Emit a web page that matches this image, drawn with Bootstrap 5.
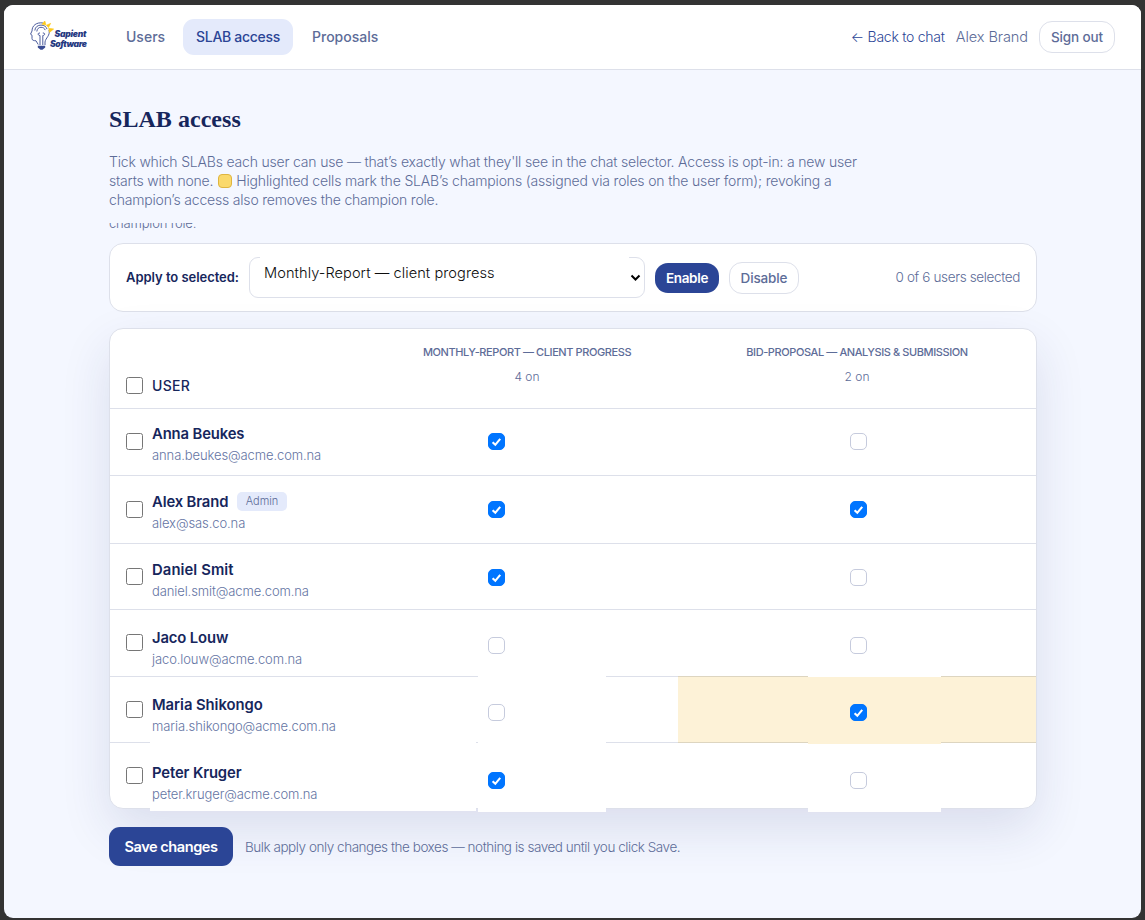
<!DOCTYPE html>
<html lang="en">
<head>
<meta charset="utf-8">
<meta name="viewport" content="width=device-width, initial-scale=1">
<title>SLAB access</title>
<link href="https://cdn.jsdelivr.net/npm/bootstrap@5.3.0/dist/css/bootstrap.min.css" rel="stylesheet">
<style>
:root{--ink:#16265c;--brand:#2b4596;--muted2:#5d6c98;--line:#dde0ea}
body{background:#333;font-family:Inter,"Open Sans",sans-serif;font-weight:350;color:var(--muted2);font-size:14px;line-height:20px;padding:5px 4px 2px;height:920px;overflow:hidden}
.frame{background:#f4f7ff;border-radius:9px;height:913px;overflow:hidden}
.topbar{height:65px;background:#fff;border-bottom:1px solid var(--line);padding:0 26px}
.links{margin-left:25px;gap:6px}
.topbar .nav-link{font-size:14px;font-weight:500;color:var(--muted2);padding:8px 0 8px 13px;border-radius:11px;line-height:20px;height:36px;width:110px;white-space:nowrap}
.topbar .nav-link:first-child{width:64px}
.topbar .nav-link.active{background:#e4eafb;color:var(--brand);letter-spacing:-.29px}
.logo{width:58px;height:30px;margin-top:-2px}
.back{color:var(--brand);margin-right:11px;letter-spacing:-.26px}
.who{font-size:14.6px;margin-right:11px;letter-spacing:-.1px}
.pill{border:1px solid var(--line);background:#fff;border-radius:13px;height:32px;font-size:13.5px;font-weight:500;color:var(--muted2);padding:0;line-height:30px;letter-spacing:-.13px;width:76px;white-space:nowrap}
.page{width:928px;margin-left:105px;padding-top:34px}
h1{font:700 24px/30px "Liberation Serif",serif;color:var(--ink);margin:0 0 18px;letter-spacing:.04px}
.intro{line-height:19px;font-size:14px;margin:0;white-space:nowrap;letter-spacing:-.19px}
.intro .legend{letter-spacing:-.165px}
.swatch{display:inline-block;width:14px;height:14px;border-radius:4px;background:#fad96c;border:1px solid #dfb540;vertical-align:-2px;margin:0 4px 0 5px}
.ghost{height:8px;margin:14px 0 12px;overflow:hidden;font-size:13px;line-height:16px;display:flex;align-items:flex-end;letter-spacing:-.18px}
.panel{background:#fff;border:1px solid var(--line);border-radius:14px}
.tools{height:69px;padding:0 16px;margin-bottom:16px}
.tools .lead-in{font-weight:600;font-size:13px;color:var(--ink);letter-spacing:-.04px;width:113px;white-space:nowrap;margin-top:-1px}
.tools .total{font-size:13.5px;letter-spacing:-.36px;margin-top:-1px}
.picker{width:396px;height:41px;border:1px solid var(--line);border-radius:9px;margin-left:10px;position:relative;color:#0d0d0d;font-size:14.6px;padding:5px 14px;letter-spacing:.06px}
.picker::before{content:"";position:absolute;left:10px;right:15px;top:-1px;height:1px;background:#fff}
.picker svg{position:absolute;right:3px;top:16px}
.solid{background:var(--brand);color:#fff;font-weight:600;border:0;letter-spacing:-.35px}
.apply{width:64px;height:30px;margin-left:10px}
.revoke{width:70px;margin-left:10px}
.matrix{height:481px;box-shadow:0 20px 50px rgba(30,45,105,.12)}
.line3{display:grid;grid-template-columns:266px 302px 358px;border-bottom:1px solid var(--line);height:67px}
.line3>div{position:relative}
.line3.head{height:80px}
.line3.r2{height:68px}.line3.r3,.line3.r5{height:66px}.line3.r6{height:65px;border:0}
.userhead{padding:47px 0 0 42px;font-weight:500;color:var(--ink);letter-spacing:.3px}
.person{padding:15px 0 0 42px}
.r2 .person,.r3 .person{padding-top:16px}.r4 .person,.r5 .person{padding-top:18px}.r6 .person{padding-top:20px}
.person b{display:block;font-weight:600;font-size:14.8px;color:var(--ink);line-height:20px;letter-spacing:-.12px}
.r3 .person b{letter-spacing:.1px}.r5 .person b{letter-spacing:-.04px}
.person small{display:block;font-size:13px;line-height:20px;margin-top:1px;color:#6474a3;font-weight:300;letter-spacing:-.1px}
.tick{position:absolute;width:17px;height:17px;margin:0!important;top:24px;border:1px solid #c6cbdd;border-radius:5px!important;background-size:17px 17px!important;z-index:2}
.tick.sel{left:16px;border-color:#767676;border-radius:2.5px!important}
.r2 .tick.sel{top:25px}.head .tick.sel{top:48px}
.r2 .tick,.r3 .tick{top:25px}.r3 .tick.sel{top:24px}
.r4 .tick:not(.sel),.r5 .tick:not(.sel){top:27px}.r6 .tick:not(.sel){top:29px}
.c1 .tick{left:112px}.c2 .tick{left:172px}
.tick:checked{background-color:#0075ff;border-color:#0075ff;background-image:url("data:image/svg+xml,%3Csvg xmlns='http://www.w3.org/2000/svg' viewBox='0 0 17 17'%3E%3Cpath d='M4.6 9.2l2.7 2.6 4.900-6' fill='none' stroke='%23fff' stroke-width='2.1'/%3E%3C/svg%3E")}
.colname{font-size:11px;font-weight:500;line-height:14px;padding-top:16px;text-align:center;letter-spacing:-.41px}
.count{font-size:12px;line-height:16px;margin-top:10px;text-align:center;font-weight:300}
.role{position:absolute;left:127px;top:16px;width:50px;height:19px;background:#e4eafb;border-radius:5px;font-size:11px;line-height:19px;text-align:center}
.champ{background:#fdf2d7;box-shadow:0 1px #ddd5c0,0 -1px #ddd5c0}
.cover::after{content:"";position:absolute;background:#fff;top:-1px;height:68px}
.c1.cover::after{left:102px;width:128px}
.c2.cover::after{left:130px;width:133px}
.c2.champ.cover::after{background:linear-gradient(#fff 1px,#fdf2d7 1px);z-index:1}
.r6 .cover::after{height:70px}.r6 .c2.cover::after{top:1px;height:68px}
.r6 .c0.cover::after{left:40px;width:326px;height:69px}
.r6 .person{position:relative;z-index:1}
.save{width:124px;height:39px;border-radius:11px;font-size:14.6px;margin-top:18px;letter-spacing:-.48px}
.hint{font-size:13.5px;margin:28px 0 0 12px;letter-spacing:-.46px;white-space:nowrap}
</style>
</head>
<body>
<div class="frame">
<nav class="topbar d-flex align-items-center">
 <svg class="logo" viewBox="30 20 58 30"><g fill="none" stroke="#3a4c93" stroke-width=".9"><path d="M43 22c-6.500-1-11 2.500-11 8l-1.500 3.200 1.500 1v3.400c0 1.800 1.800 2 4 2.200l2.200 3.700M49 29c1.500 5.500-3.500 8-4 12v3"/><path d="M34.800 29.500c.4-3.600 3-5.400 6.200-5.400s5.400 1.600 6 4M36.800 30.500c.3-2.800 2-4.200 4.200-4.200s3.600 1 4.200 2.800"/><path d="M40 44V34.500c-2.500 0-2.500-3 0-2.500M42.800 44V34.500c2.500 0 2.500-3 0-2.500"/></g><path d="M37.800 44.800h7.400v1.600l-2.700 2.400h-2l-2.700-2.400z" fill="#3a4c93"/><path d="M42 23.300l2.800-3.500 1.200 4.200zM46.400 24.300l4.300-2-2.200 4.300zM48.700 27.200l5 .8-4.200 3.400z" fill="#fdc91c" stroke="#fdc91c" stroke-width=".6"/><g font-family="Inter,sans-serif" font-weight="900" font-style="italic" font-size="8.600" fill="#25387f"><text x="54.500" y="36" textLength="32">Sapient</text><text x="50" y="46" textLength="37">Software</text></g></svg>
 <div class="nav d-flex links"><a class="nav-link">Users</a><a class="nav-link active">SLAB access</a><a class="nav-link">Proposals</a></div>
 <div class="ms-auto d-flex align-items-center"><span class="back">← Back to chat</span><span class="who">Alex Brand</span><button class="pill">Sign out</button></div>
</nav>
<main class="page">
 <h1>SLAB access</h1>
 <p class="intro">Tick which SLABs each user can use — that’s exactly what they'll see in the chat selector. Access is opt-in: a new user<br>starts with none.<i class="swatch"></i><span class="legend">Highlighted cells mark the SLAB’s champions (assigned via roles on the user form); revoking a</span><br>champion’s access also removes the champion role.</p>
 <div class="ghost">champion role.</div>
 <section class="panel tools d-flex align-items-center">
  <span class="lead-in">Apply to selected:</span>
  <div class="picker">Monthly-Report — client progress<svg width="11" height="8"><path d="M1.500 1.500l4 4 4-4" fill="none" stroke="#000" stroke-width="2"/></svg></div>
  <button class="pill solid apply">Enable</button><button class="pill revoke">Disable</button>
  <span class="total ms-auto">0 of 6 users selected</span>
 </section>
 <section class="panel matrix">
  <div class="line3 head"><div class="c0"><input type="checkbox" class="form-check-input tick sel"><div class="userhead">USER</div></div><div><div class="colname">MONTHLY-REPORT — CLIENT PROGRESS</div><div class="count">4 on</div></div><div><div class="colname">BID-PROPOSAL — ANALYSIS &amp; SUBMISSION</div><div class="count">2 on</div></div></div>
  <div class="line3 r1"><div class="c0"><input type="checkbox" class="form-check-input tick sel"><div class="person"><b>Anna Beukes</b><small>anna.beukes@acme.com.na</small></div></div><div class="c1"><input type="checkbox" checked class="form-check-input tick"></div><div class="c2"><input type="checkbox" class="form-check-input tick"></div></div>
  <div class="line3 r2"><div class="c0"><input type="checkbox" class="form-check-input tick sel"><div class="person"><b>Alex Brand</b><small>alex@sas.co.na</small></div><span class="role">Admin</span></div><div class="c1"><input type="checkbox" checked class="form-check-input tick"></div><div class="c2"><input type="checkbox" checked class="form-check-input tick"></div></div>
  <div class="line3 r3"><div class="c0"><input type="checkbox" class="form-check-input tick sel"><div class="person"><b>Daniel Smit</b><small>daniel.smit@acme.com.na</small></div></div><div class="c1"><input type="checkbox" checked class="form-check-input tick"></div><div class="c2"><input type="checkbox" class="form-check-input tick"></div></div>
  <div class="line3 r4"><div class="c0"><input type="checkbox" class="form-check-input tick sel"><div class="person"><b>Jaco Louw</b><small>jaco.louw@acme.com.na</small></div></div><div class="c1"><input type="checkbox" class="form-check-input tick"></div><div class="c2"><input type="checkbox" class="form-check-input tick"></div></div>
  <div class="line3 r5"><div class="c0"><input type="checkbox" class="form-check-input tick sel"><div class="person"><b>Maria Shikongo</b><small>maria.shikongo@acme.com.na</small></div></div><div class="c1 cover"><input type="checkbox" class="form-check-input tick"></div><div class="c2 champ cover"><input type="checkbox" checked class="form-check-input tick"></div></div>
  <div class="line3 r6"><div class="c0 cover"><input type="checkbox" class="form-check-input tick sel"><div class="person"><b>Peter Kruger</b><small>peter.kruger@acme.com.na</small></div></div><div class="c1 cover"><input type="checkbox" checked class="form-check-input tick"></div><div class="c2 cover"><input type="checkbox" class="form-check-input tick"></div></div>
 </section>
 <div class="d-flex"><button class="pill solid save">Save changes</button><span class="hint">Bulk apply only changes the boxes — nothing is saved until you click Save.</span></div>
</main>
</div>
<script src="https://cdn.jsdelivr.net/npm/bootstrap@5.3.0/dist/js/bootstrap.bundle.min.js"></script>
</body>
</html>
